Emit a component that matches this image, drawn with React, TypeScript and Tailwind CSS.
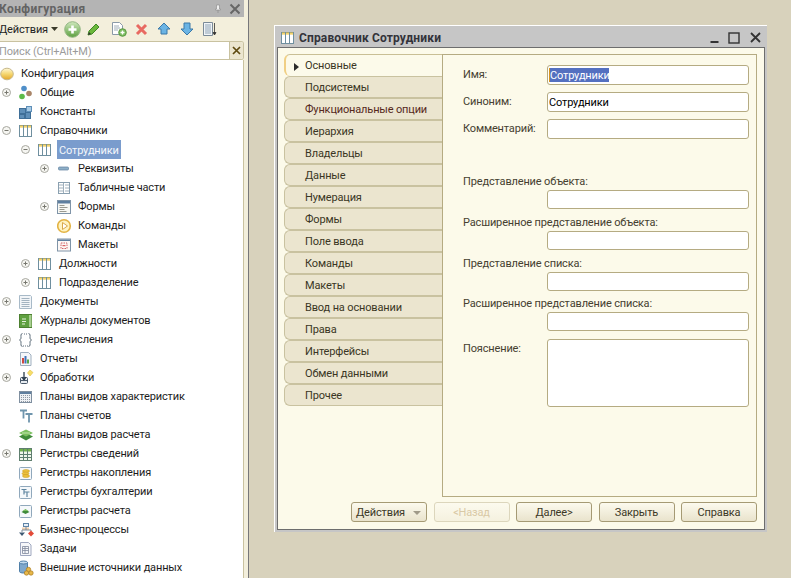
import React from "react";

const S = ({ children, w = 16, h = 16 }: { children: React.ReactNode; w?: number; h?: number }) => (
  <svg width={w} height={h} viewBox={`0 0 ${w} ${h}`} className="block shrink-0">{children}</svg>
);

const Expander = ({ open }: { open: boolean }) => (
  <S w={13} h={13}>
    <circle cx="6.500" cy="6.500" r="4" fill="#f6f6f2" stroke="#a8a8a0" />
    <path d={open ? "M4.500 6.500h4" : "M4.500 6.500h4M6.500 4.500v4"} stroke="#77776f" fill="none" />
  </S>
);

const Catalog = () => (
  <S>
    <rect x="0.500" y="2.500" width="12" height="11" fill="#fff" stroke="#6f8f9f" />
    <path d="M4.500 3v10M8.500 3v10" stroke="#6f8f9f" />
    <path d="M1 3h3M5 3h3M9 3h3M1 4h3M5 4h3M9 4h3" stroke="#f0c43c" />
  </S>
);

const icons: Record<string, React.ReactNode> = {
  common: (
    <S>
      <circle cx="5" cy="3.500" r="2.800" fill="#4f8fc9" />
      <circle cx="3" cy="11.500" r="2.800" fill="#5cbb4a" />
      <circle cx="10" cy="8.500" r="2.800" fill="#a98568" />
    </S>
  ),
  constants: (
    <S>
      <rect x="0.500" y="4.500" width="6" height="5" fill="#5f8fb8" stroke="#3f6f98" />
      <rect x="7.500" y="2.500" width="5" height="5" fill="#a8cbe6" stroke="#5f8fb8" />
      <rect x="0.500" y="10.500" width="5" height="4" fill="#5f8fb8" stroke="#3f6f98" />
      <rect x="6.500" y="8.500" width="5" height="6" fill="#5f8fb8" stroke="#3f6f98" />
    </S>
  ),
  catalog: <Catalog />,
  attrs: (
    <S>
      <rect x="1.500" y="6" width="10" height="3" rx="1" fill="#8fb0c8" stroke="#5f7f9f" strokeWidth="0.700" />
    </S>
  ),
  tabular: (
    <S>
      <rect x="1.500" y="2.500" width="11" height="11" fill="#fff" stroke="#8aa0b0" />
      <path d="M6.500 3v10M8 5h4M8 8h4M8 11h4M2 5h4M2 8h4M2 11h4" stroke="#a0b0bc" />
    </S>
  ),
  forms: (
    <S>
      <rect x="0.500" y="1.500" width="13" height="13" fill="#f8f8f4" stroke="#7f94a8" />
      <rect x="1" y="2" width="12" height="2.500" fill="#5f7f9f" />
      <path d="M2.500 6.500h5M2.500 8.500h8M2.500 10.500h5M2.500 12.500h7" stroke="#9a9a90" />
    </S>
  ),
  commands: (
    <S>
      <circle cx="7" cy="8" r="6.300" fill="#fff3c0" stroke="#e3b344" strokeWidth="1.600" />
      <path d="M5.500 4.500 10.500 8 5.500 11.500Z" fill="#fff" stroke="#d8a84a" />
    </S>
  ),
  layouts: (
    <S>
      <rect x="0.500" y="2" width="13" height="12" fill="#fdf8f6" stroke="#7f94a8" />
      <rect x="1" y="2.500" width="12" height="1.500" fill="#5f7f9f" />
      <rect x="4" y="6" width="6" height="5.500" fill="none" stroke="#d0666a" strokeDasharray="1.500 1" />
      <path d="M5.500 8.700h3" stroke="#d04044" />
    </S>
  ),
  documents: (
    <S>
      <path d="M0.500 1.500h11l1 1v12h-12z" fill="#f2f5f8" stroke="#a8bac8" />
      <path d="M2.500 4.500h8M2.500 6.500h8M2.500 8.500h8M2.500 10.500h8M2.500 12.500h8" stroke="#a3b3c0" />
    </S>
  ),
  journals: (
    <S>
      <rect x="0.500" y="1.500" width="12" height="13" fill="#5fa040" stroke="#4c8030" />
      <rect x="10" y="2" width="2.500" height="12" fill="#a8cf90" />
      <path d="M3 6h4M3 8.500h4M3 11h3" stroke="#e6f2dc" strokeWidth="1.200" />
    </S>
  ),
  enums: (
    <S>
      <path d="M3.500 1.500C1.500 1.500 2 4 2 6c0 1.500-1.500 2-1.500 2S2 8.500 2 10c0 2-.5 4.500 1.500 4.500M9.500 1.500c2 0 1.500 2.500 1.500 4.500 0 1.500 1.500 2 1.500 2S11 8.500 11 10c0 2 .5 4.500-1.500 4.500" fill="none" stroke="#5f6f7c" />
      <path d="M4 14h1M6 14h1M8 14h1M5 2h1M7 2h1" stroke="#5f6f7c" />
    </S>
  ),
  reports: (
    <S>
      <path d="M1.500 1.500h8l2.500 2.500v10.500H1.500z" fill="#f5f7fa" stroke="#a0b0c0" />
      <rect x="3" y="7" width="2" height="5.500" fill="#d04a40" />
      <rect x="5.500" y="5" width="2" height="7.500" fill="#3f72b8" />
      <rect x="8" y="8.500" width="2" height="4" fill="#58a848" />
    </S>
  ),
  processing: (
    <S>
      <rect x="1.500" y="7.500" width="7" height="6" rx="1" fill="#e8edf2" stroke="#49596a" />
      <path d="M5 2v7M3 7l2 3 2-3" fill="none" stroke="#2f3f4f" strokeWidth="1.300" />
      <path d="M1.500 10.500h7" stroke="#49596a" />
      <path d="M11 0l3 2.500-3 3.500-2.500-3z" fill="#f6de6a" stroke="#e0bd40" strokeWidth="0.600" />
    </S>
  ),
  chartChars: (
    <S>
      <rect x="0.500" y="2.500" width="12" height="11" fill="#eef1f4" stroke="#7f8fa0" />
      <rect x="1" y="3" width="11" height="2" fill="#5f7f9f" />
      <path d="M2.500 6v7M4.500 6v7M6.500 6v7M8.500 6v7M10.500 6v7" stroke="#9098a4" strokeDasharray="1 1" />
    </S>
  ),
  accounts: (
    <S>
      <path d="M1 2.500h7M4.500 2.500v8" stroke="#6f95ad" strokeWidth="1.800" fill="none" />
      <path d="M6.500 6h7M10 6v8.500" stroke="#6f95ad" strokeWidth="1.800" fill="none" />
    </S>
  ),
  calcTypes: (
    <S>
      <path d="M0 9.500l7-3.500 7 3.500-7 4z" fill="#3f8a3a" />
      <path d="M0 6l7-3.500L14 6 7 9.500z" fill="#7cc060" />
      <path d="M3 6h8" stroke="#c4e6b0" />
    </S>
  ),
  regInfo: (
    <S>
      <rect x="0.500" y="2.500" width="12" height="12" fill="#f2f6ec" stroke="#5f7f6f" />
      <rect x="1" y="3" width="11" height="2.500" fill="#6fb04a" />
      <path d="M4.500 3v11M8.500 3v11M1 8.500h11M1 11.500h11" stroke="#5f7f6f" />
    </S>
  ),
  regAccum: (
    <S>
      <rect x="0.500" y="2.500" width="12" height="12" rx="1" fill="#f5f8fb" stroke="#90a8bc" />
      <ellipse cx="7" cy="6" rx="3.500" ry="1.500" fill="#ecc13e" stroke="#c89a20" strokeWidth="0.500" />
      <ellipse cx="6.500" cy="8.500" rx="3.500" ry="1.500" fill="#ecc13e" stroke="#c89a20" strokeWidth="0.500" />
      <ellipse cx="7" cy="11" rx="3.500" ry="1.500" fill="#ecc13e" stroke="#c89a20" strokeWidth="0.500" />
    </S>
  ),
  regAcc: (
    <S>
      <rect x="0.500" y="2.500" width="12" height="12" rx="1" fill="#f5f8fb" stroke="#90a8bc" />
      <path d="M2.500 5.500h5M5 5.500v5M5.500 8h5M8 8v5" stroke="#5f85a0" strokeWidth="1.200" fill="none" />
    </S>
  ),
  regCalc: (
    <S>
      <rect x="0.500" y="2.500" width="12" height="12" rx="1" fill="#f5f8fb" stroke="#90a8bc" />
      <path d="M2.500 9 6.500 6.500 10.500 9 6.500 11z" fill="#3f8a3a" />
      <path d="M3.500 8 6.500 6 9.500 8z" fill="#7cc060" />
    </S>
  ),
  bp: (
    <S>
      <rect x="3" y="5.500" width="7" height="2.500" fill="#e8b078" opacity="0.600" />
      <rect x="4.500" y="1.500" width="5" height="3" fill="#e8f0f8" stroke="#5f85a8" />
      <path d="M7 5v3M3 8h9M3 8v2M12 8v1" stroke="#7f8f9f" fill="none" />
      <path d="M0 10.500h6L3 14z" fill="#3f5a74" />
      <path d="M12 8.500l3 3-3 3-3-3z" fill="#e24a38" />
    </S>
  ),
  tasks: (
    <S>
      <path d="M1.500 1.500h8l2.500 2.500v10.500H1.500z" fill="#f6f7fa" stroke="#a0a8c0" />
      <path d="M3.500 5.500h6v7h-6zM3.500 7.500h6M3.500 9.500h6M6 5.500v7" fill="none" stroke="#80889c" strokeWidth="0.800" />
    </S>
  ),
  external: (
    <S>
      <path d="M0.500 2.500v9c0 1 2 1.500 4 1.500s4-.5 4-1.500v-9z" fill="#7fa8cc" stroke="#4f7fa8" />
      <ellipse cx="4.500" cy="2.500" rx="4" ry="1.500" fill="#c4dcef" stroke="#4f7fa8" />
      <circle cx="9.500" cy="9.500" r="2.200" fill="#e8b84a" stroke="#a87a20" strokeWidth="0.700" />
      <circle cx="7.500" cy="13" r="2.200" fill="#e8b84a" stroke="#a87a20" strokeWidth="0.700" />
      <circle cx="12" cy="13" r="2.200" fill="#e8b84a" stroke="#a87a20" strokeWidth="0.700" />
    </S>
  ),
};

type Row = { label: string; d: 0 | 1 | 2; e?: "+" | "-"; i: string; sel?: boolean };

const rows: Row[] = [
  { label: "Общие", d: 0, e: "+", i: "common" },
  { label: "Константы", d: 0, i: "constants" },
  { label: "Справочники", d: 0, e: "-", i: "catalog" },
  { label: "Сотрудники", d: 1, e: "-", i: "catalog", sel: true },
  { label: "Реквизиты", d: 2, e: "+", i: "attrs" },
  { label: "Табличные части", d: 2, i: "tabular" },
  { label: "Формы", d: 2, e: "+", i: "forms" },
  { label: "Команды", d: 2, i: "commands" },
  { label: "Макеты", d: 2, i: "layouts" },
  { label: "Должности", d: 1, e: "+", i: "catalog" },
  { label: "Подразделение", d: 1, e: "+", i: "catalog" },
  { label: "Документы", d: 0, e: "+", i: "documents" },
  { label: "Журналы документов", d: 0, i: "journals" },
  { label: "Перечисления", d: 0, e: "+", i: "enums" },
  { label: "Отчеты", d: 0, i: "reports" },
  { label: "Обработки", d: 0, e: "+", i: "processing" },
  { label: "Планы видов характеристик", d: 0, i: "chartChars" },
  { label: "Планы счетов", d: 0, i: "accounts" },
  { label: "Планы видов расчета", d: 0, i: "calcTypes" },
  { label: "Регистры сведений", d: 0, e: "+", i: "regInfo" },
  { label: "Регистры накопления", d: 0, i: "regAccum" },
  { label: "Регистры бухгалтерии", d: 0, i: "regAcc" },
  { label: "Регистры расчета", d: 0, i: "regCalc" },
  { label: "Бизнес-процессы", d: 0, i: "bp" },
  { label: "Задачи", d: 0, i: "tasks" },
  { label: "Внешние источники данных", d: 0, i: "external" },
];

const indent = ["pl-0", "pl-[19px]", "pl-[38px]"];

const tabs = [
  "Подсистемы",
  "Функциональные опции",
  "Иерархия",
  "Владельцы",
  "Данные",
  "Нумерация",
  "Формы",
  "Поле ввода",
  "Команды",
  "Макеты",
  "Ввод на основании",
  "Права",
  "Интерфейсы",
  "Обмен данными",
  "Прочее",
];

const Field = ({ className }: { className: string }) => (
  <div className={`ml-[104px] w-[202px] bg-white border border-[#b5ab82] rounded-[3px] ${className}`} />
);

const Label = ({ children, className }: { children: React.ReactNode; className: string }) => (
  <div className={`ml-[20px] h-[14px] leading-[16px] text-[#454030] whitespace-nowrap ${className}`}>{children}</div>
);

const Btn = ({ children, disabled, arrow }: { children: string; disabled?: boolean; arrow?: boolean }) => (
  <div
    className={`w-[76px] h-[20px] flex items-center justify-center pt-[2px] rounded-[3px] border bg-gradient-to-b ${
      disabled ? "border-[#dcd6bc] text-[#d9c9a6] from-[#fcfaee] to-[#f5f1df]" : "border-[#a59a74] text-[#3c3826] from-[#fcfaee] to-[#e9e3cc]"
    }`}
  >
    {arrow ? (
      <>
        <span className="pl-[4px] grow">{children}</span>
        <svg width="16" height="6" viewBox="0 0 16 6" className="shrink-0">
          <path d="M3 1h8L7 5z" fill="#a09a88" />
        </svg>
      </>
    ) : (
      children
    )}
  </div>
);

export default function App() {
  return (
    <div className="w-[791px] h-[578px] overflow-hidden flex bg-[#d8d2bc] font-[family-name:Roboto,sans-serif] text-[11px] tracking-[-0.15px] text-[#1c1c1c]">
      {/* Left panel */}
      <aside className="w-[249px] h-full shrink-0 bg-[#f3efdc] border-r border-[#77777a] flex flex-col overflow-hidden">
        <div className="h-[17px] w-[244px] shrink-0 bg-[#b4b4b4] flex items-center justify-between pr-[3px]">
          <span className="font-bold text-[12px] tracking-[0.4px] text-[#636363] -ml-[1px] pt-[1px]">Конфигурация</span>
          <div className="flex items-center gap-[8px]">
            <svg width="6" height="10" viewBox="0 0 6 10">
              <path d="M1.500 1h3v4h1v1H0.500V5h1zM3 6v3" fill="#eee" stroke="#888" strokeWidth="0.600" />
            </svg>
            <svg width="12" height="12" viewBox="0 0 12 12">
              <path d="M1.500 1.500l9 9M10.500 1.500l-9 9" stroke="#666" strokeWidth="2" />
            </svg>
          </div>
        </div>
        <div className="h-[24px] shrink-0 flex items-center -ml-[1px]">
          <span className="w-[48px] text-[#222] whitespace-nowrap pt-[3px]">Действия</span>
          <svg width="7" height="4" viewBox="0 0 7 4" className="ml-[4px] -mt-[1px]">
            <path d="M0 0h7L3.500 4z" fill="#3a3a2a" />
          </svg>
          <svg width="17" height="17" viewBox="0 0 17 17" className="ml-[6px] mt-[1px]">
            <defs>
              <linearGradient id="g1" x1="0" y1="0" x2="0" y2="1">
                <stop offset="0" stopColor="#cfe8bd" />
                <stop offset="1" stopColor="#5da040" />
              </linearGradient>
            </defs>
            <circle cx="8.500" cy="8.500" r="7.800" fill="url(#g1)" stroke="#93b684" />
            <path d="M8.500 4.500v8M4.500 8.500h8" stroke="#fff" strokeWidth="2.600" />
          </svg>
          <svg width="14" height="14" viewBox="0 0 14 14" className="ml-[6px]">
            <path d="M1 13l1-4 7-7 3 3-7 7z" fill="#6cb83c" stroke="#3f8a24" />
            <path d="M1 13l1-3 2 2z" fill="#333" />
          </svg>
          <svg width="16" height="16" viewBox="0 0 16 16" className="ml-[10px]">
            <path d="M1.500 1.500h7l3 3v9h-10z" fill="#fff" stroke="#8a9aa8" />
            <path d="M3 5h5M3 7h6M3 9h4" stroke="#a0aeb8" />
            <circle cx="11.500" cy="11.500" r="3.800" fill="#7cbc60" stroke="#5a9a44" />
            <path d="M11.500 9.500v4M9.500 11.500h4" stroke="#fff" strokeWidth="1.400" />
          </svg>
          <svg width="13" height="13" viewBox="0 0 13 13" className="ml-[8px]">
            <path d="M2 2l9 9M11 2l-9 9" stroke="#e86a62" strokeWidth="3" />
          </svg>
          <svg width="14" height="14" viewBox="0 0 14 14" className="ml-[9px]">
            <path d="M7 1l6 6H10v5H4V7H1z" fill="#6bb4e4" stroke="#3a78a8" />
          </svg>
          <svg width="14" height="14" viewBox="0 0 14 14" className="ml-[9px]">
            <path d="M4 1h6v6h3l-6 6-6-6h3z" fill="#6bb4e4" stroke="#3a78a8" />
          </svg>
          <svg width="14" height="15" viewBox="0 0 14 15" className="ml-[9px]">
            <path d="M0.500 0.500h9v13h-9z" fill="#f0f4f8" stroke="#7a8a98" />
            <path d="M2 3h6M2 5h6M2 7h6M2 9h6M2 11h6" stroke="#8fa3b4" />
            <path d="M11.500 1v11M10 10.500l1.500 2.500 1.500-2.500z" stroke="#333" fill="#333" strokeWidth="0.800" />
          </svg>
        </div>
        <div className="h-[19px] w-[244px] shrink-0 flex bg-white border border-l-0 border-[#c9c2a0] rounded-r-[3px] overflow-hidden">
          <span className="grow text-[#9b9b9b] -ml-[1px] leading-[19px]">Поиск (Ctrl+Alt+M)</span>
          <div className="w-[14px] bg-[#ebe5cf] border-l border-[#c9c2a0] flex items-center justify-center">
            <svg width="9" height="9" viewBox="0 0 9 9">
              <path d="M1 1l7 7M8 1L1 8" stroke="#5e4a10" strokeWidth="1.700" />
            </svg>
          </div>
        </div>
        <div className="w-[244px] grow bg-white border-r border-[#c9c2a0] pt-[4px] overflow-hidden">
          <div className="h-[19px] flex items-center">
            <svg width="14" height="14" viewBox="0 0 14 14" className="shrink-0">
              <defs>
                <linearGradient id="g2" x1="0" y1="0" x2="0" y2="1">
                  <stop offset="0" stopColor="#fff8d8" />
                  <stop offset="0.500" stopColor="#f5d770" />
                  <stop offset="1" stopColor="#e2a52a" />
                </linearGradient>
              </defs>
              <ellipse cx="7" cy="7" rx="6.300" ry="5.800" fill="url(#g2)" stroke="#c7b88a" />
            </svg>
            <span className="ml-[7px] pt-[2px]">Конфигурация</span>
          </div>
          {rows.map((r) => (
            <div key={r.label + r.d} className={`h-[19px] flex items-center ${indent[r.d]}`}>
              <div className="w-[19px] shrink-0">{r.e && <Expander open={r.e === "-"} />}</div>
              <div className="w-[19px] shrink-0">{icons[r.i]}</div>
              {r.sel ? (
                <span className="bg-[#7a9ccd] text-[#f4f7fb] h-[19px] leading-[21px] px-[2px]">{r.label}</span>
              ) : (
                <span className="ml-[2px] pt-[2px] whitespace-nowrap">{r.label}</span>
              )}
            </div>
          ))}
        </div>
      </aside>

      {/* Workspace */}
      <main className="grow pl-[25px] pt-[25px]">
        <div className="w-[493px] h-[507px] bg-[#c6c6c6] border-t border-l border-t-white border-l-white flex flex-col">
          <div className="h-[21px] shrink-0 flex items-center pl-[6px] pr-[6px] pt-[2px]">
            <Catalog />
            <span className="ml-[2px] grow font-bold text-[12px] tracking-[0.15px] text-[#33333a]">Справочник Сотрудники</span>
            <svg width="9" height="10" viewBox="0 0 9 10" className="mr-[9px]">
              <path d="M0.500 9h8" stroke="#333" strokeWidth="2" />
            </svg>
            <svg width="12" height="12" viewBox="0 0 12 12" className="mr-[10px]">
              <rect x="1" y="1" width="10" height="10" fill="none" stroke="#333" strokeWidth="1.400" />
            </svg>
            <svg width="11" height="11" viewBox="0 0 11 11">
              <path d="M1 1l9 9M10 1l-9 9" stroke="#333" strokeWidth="1.800" />
            </svg>
          </div>
          <div className="grow mx-[2px] mb-[2px] border border-[#6d6d6d] bg-[#fcfaea] flex flex-col pl-[6px] pr-[7px] pt-[6px]">
            <div className="flex h-[443px] shrink-0">
              <div className="w-[158px] shrink-0">
                <div className="h-[22px] flex items-center pl-[8px] pt-[2px] bg-[#fcfaea] rounded-tl-[6px] rounded-bl-[6px] border-t border-l-2 border-t-[#c9bf95] border-l-[#f0cf84] text-[#3a3624]">
                  <svg width="5" height="8" viewBox="0 0 5 8" className="shrink-0">
                    <path d="M0 0l5 4-5 4z" fill="#2c2c2c" />
                  </svg>
                  <span className="ml-[6px]">Основные</span>
                </div>
                {tabs.map((t) => (
                  <div
                    key={t}
                    className={`h-[22px] flex items-center pl-[20px] pt-[2px] whitespace-nowrap bg-[#ebe5cf] rounded-tl-[6px] rounded-bl-[6px] border border-r-0 border-[#c9c2a0] ${
                      t === "Функциональные опции" ? "text-[#55281c]" : "text-[#3a3624]"
                    }`}
                  >
                    {t}
                  </div>
                ))}
              </div>
              <div className="w-[315px] border border-[#b5ab82] bg-[#fcfaea] pt-[10px]">
                <div className="flex h-[20px]">
                  <div className="w-[104px] pl-[20px] pt-[2px] text-[#454030]">Имя:</div>
                  <div className="w-[202px] h-[20px] bg-white border border-[#b5ab82] rounded-[3px] pl-[1px] pt-[2px]">
                    <span className="block w-[60px] h-[14px] leading-[16px] bg-[#5470c0] text-white border-l border-[#d8941e] whitespace-nowrap">Сотрудники</span>
                  </div>
                </div>
                <div className="flex h-[20px] mt-[7px]">
                  <div className="w-[104px] pl-[20px] pt-[2px] text-[#454030]">Синоним:</div>
                  <div className="w-[202px] h-[20px] bg-white border border-[#b5ab82] rounded-[3px] pl-[1px] pt-[2px] leading-[16px] text-black">Сотрудники</div>
                </div>
                <div className="flex h-[20px] mt-[7px]">
                  <div className="w-[104px] pl-[20px] pt-[2px] text-[#454030] whitespace-nowrap">Комментарий:</div>
                  <div className="w-[202px] h-[20px] bg-white border border-[#b5ab82] rounded-[3px]" />
                </div>
                <Label className="mt-[35px]">Представление объекта:</Label>
                <Field className="h-[19px] mt-[2px]" />
                <Label className="mt-[6px]">Расширенное представление объекта:</Label>
                <Field className="h-[19px] mt-[2px]" />
                <Label className="mt-[6px]">Представление списка:</Label>
                <Field className="h-[19px] mt-[2px]" />
                <Label className="mt-[5px]">Расширенное представление списка:</Label>
                <Field className="h-[19px] mt-[2px]" />
                <div className="flex h-[68px] mt-[8px]">
                  <div className="w-[104px] pl-[20px] pt-[2px] text-[#454030]">Пояснение:</div>
                  <div className="w-[202px] h-[68px] bg-white border border-[#b5ab82] rounded-[3px]" />
                </div>
              </div>
            </div>
            <div className="flex justify-end gap-[6.5px] mt-[5px]">
              <Btn arrow>Действия</Btn>
              <Btn disabled>&lt;Назад</Btn>
              <Btn>Далее&gt;</Btn>
              <Btn>Закрыть</Btn>
              <Btn>Справка</Btn>
            </div>
          </div>
        </div>
      </main>
    </div>
  );
}
